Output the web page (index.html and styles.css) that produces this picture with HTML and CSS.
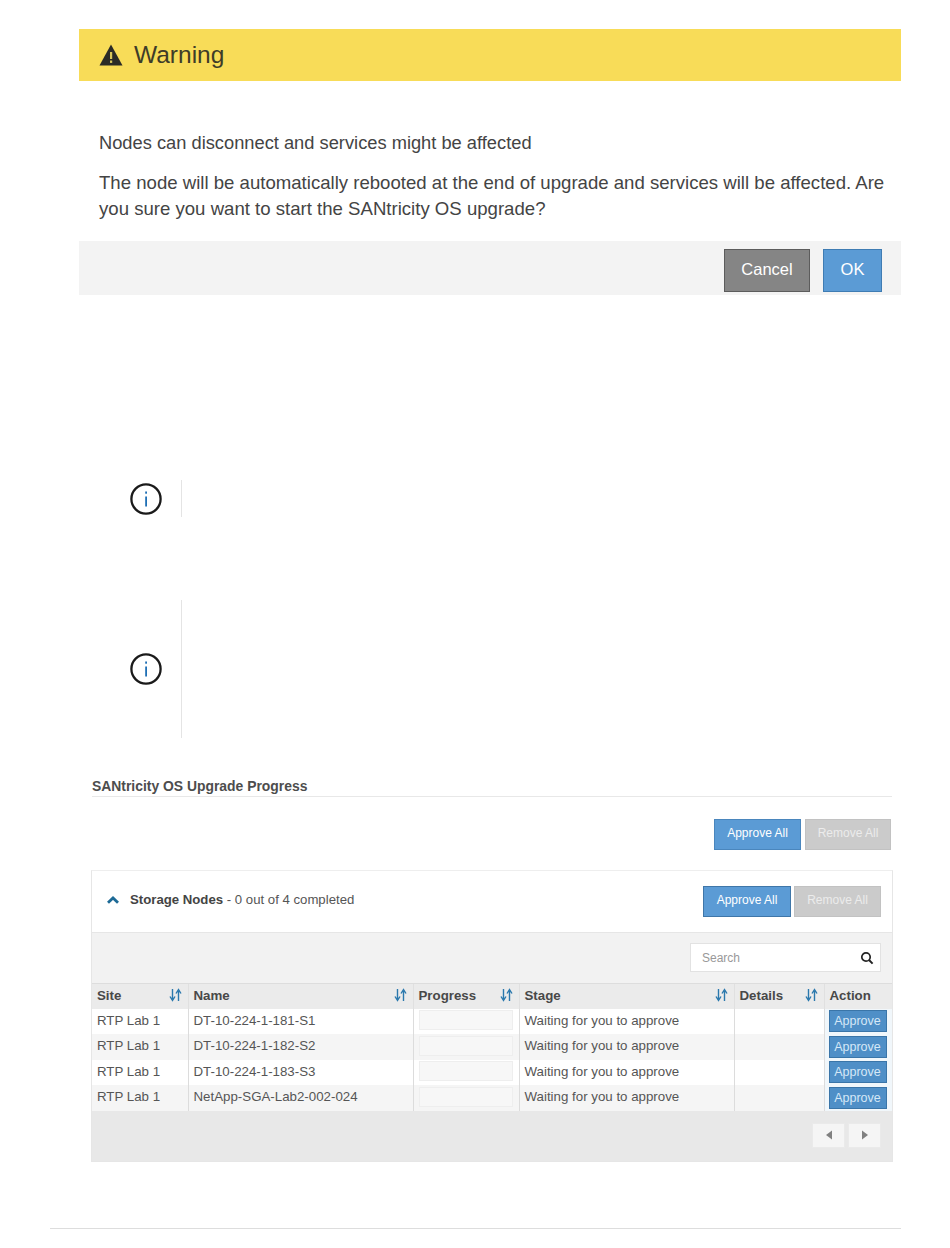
FILE: index.html
```html
<!DOCTYPE html>
<html lang="en">
<head>
    <meta charset="UTF-8">
    <meta name="viewport" content="width=device-width, initial-scale=1.0">
    <title>SANtricity OS Upgrade</title>
    <link rel="stylesheet" href="styles.css">
</head>
<body>
    <div class="dialog">
        <div class="dialog-header">
            <svg class="warn-icon" viewBox="0 0 24 22" width="24" height="22"><path d="M12 0.5 L23.5 21.5 L0.5 21.5 Z" fill="#2b2b26"/><rect x="11" y="8" width="2.2" height="7" fill="#d8c65a"/><rect x="11" y="16.5" width="2.2" height="2.4" fill="#d8c65a"/></svg>
            <span>Warning</span>
        </div>
        <div class="dialog-body">
            <p class="dialog-lead">Nodes can disconnect and services might be affected</p>
            <p class="dialog-text">The node will be automatically rebooted at the end of upgrade and services will be affected. Are you sure you want to start the SANtricity OS upgrade?</p>
        </div>
        <div class="dialog-footer">
            <button class="btn-cancel">Cancel</button>
            <button class="btn-ok">OK</button>
        </div>
    </div>

    <div class="note note-short">
        <div class="note-icon">
            <svg viewBox="0 0 32 32" width="32" height="32"><circle cx="16" cy="16" r="14.6" fill="none" stroke="#1a1a1a" stroke-width="2.3"/><rect x="15.2" y="13.5" width="1.8" height="10" fill="#1f6fb5"/><rect x="15.2" y="8.5" width="1.8" height="2.2" fill="#1f6fb5"/></svg>
        </div>
        <div class="note-body"></div>
    </div>

    <div class="note note-tall">
        <div class="note-icon">
            <svg viewBox="0 0 32 32" width="32" height="32"><circle cx="16" cy="16" r="14.6" fill="none" stroke="#1a1a1a" stroke-width="2.3"/><rect x="15.2" y="13.5" width="1.8" height="10" fill="#1f6fb5"/><rect x="15.2" y="8.5" width="1.8" height="2.2" fill="#1f6fb5"/></svg>
        </div>
        <div class="note-body"></div>
    </div>

    <div class="progress">
        <h2 class="progress-title">SANtricity OS Upgrade Progress</h2>
        <div class="progress-actions">
            <button class="btn-approve-all">Approve All</button>
            <button class="btn-remove-all">Remove All</button>
        </div>

        <div class="panel">
            <div class="panel-header">
                <div class="panel-name">
                    <svg viewBox="0 0 12 8" width="12" height="8"><path d="M1 6.8 L6 2 L11 6.8" fill="none" stroke="#1d6a96" stroke-width="2.8"/></svg>
                    <span><b>Storage Nodes</b> - 0 out of 4 completed</span>
                </div>
                <div class="panel-actions">
                    <button class="btn-approve-all">Approve All</button>
                    <button class="btn-remove-all">Remove All</button>
                </div>
            </div>
            <div class="panel-search">
                <div class="search-box">
                    <span>Search</span>
                    <svg viewBox="0 0 14 14" width="14" height="14"><circle cx="6" cy="6" r="4.2" fill="none" stroke="#222" stroke-width="1.7"/><path d="M9 9 L12.6 12.6" stroke="#222" stroke-width="2"/></svg>
                </div>
            </div>
            <table class="nodes">
                <colgroup>
                    <col class="col-site"><col class="col-name"><col class="col-progress"><col class="col-stage"><col class="col-details"><col class="col-action">
                </colgroup>
                <thead>
                    <tr>
                        <th><div class="th-inner">Site<svg class="sort" viewBox="0 0 13 14" width="13" height="14"><path d="M3.5 1 V11 M1 8.5 L3.5 12.5 L6 8.5 M9.5 13 V3 M7 5.5 L9.5 1.5 L12 5.5" fill="none" stroke="#2a78ad" stroke-width="1.4"/></svg></div></th>
                        <th><div class="th-inner">Name<svg class="sort" viewBox="0 0 13 14" width="13" height="14"><path d="M3.5 1 V11 M1 8.5 L3.5 12.5 L6 8.5 M9.5 13 V3 M7 5.5 L9.5 1.5 L12 5.5" fill="none" stroke="#2a78ad" stroke-width="1.4"/></svg></div></th>
                        <th><div class="th-inner">Progress<svg class="sort" viewBox="0 0 13 14" width="13" height="14"><path d="M3.5 1 V11 M1 8.5 L3.5 12.5 L6 8.5 M9.5 13 V3 M7 5.5 L9.5 1.5 L12 5.5" fill="none" stroke="#2a78ad" stroke-width="1.4"/></svg></div></th>
                        <th><div class="th-inner">Stage<svg class="sort" viewBox="0 0 13 14" width="13" height="14"><path d="M3.5 1 V11 M1 8.5 L3.5 12.5 L6 8.5 M9.5 13 V3 M7 5.5 L9.5 1.5 L12 5.5" fill="none" stroke="#2a78ad" stroke-width="1.4"/></svg></div></th>
                        <th><div class="th-inner">Details<svg class="sort" viewBox="0 0 13 14" width="13" height="14"><path d="M3.5 1 V11 M1 8.5 L3.5 12.5 L6 8.5 M9.5 13 V3 M7 5.5 L9.5 1.5 L12 5.5" fill="none" stroke="#2a78ad" stroke-width="1.4"/></svg></div></th>
                        <th><div class="th-inner">Action</div></th>
                    </tr>
                </thead>
                <tbody>
                    <tr>
                        <td>RTP Lab 1</td><td>DT-10-224-1-181-S1</td><td><div class="bar"></div></td><td>Waiting for you to approve</td><td></td><td><button class="btn-approve">Approve</button></td>
                    </tr>
                    <tr>
                        <td>RTP Lab 1</td><td>DT-10-224-1-182-S2</td><td><div class="bar"></div></td><td>Waiting for you to approve</td><td></td><td><button class="btn-approve">Approve</button></td>
                    </tr>
                    <tr>
                        <td>RTP Lab 1</td><td>DT-10-224-1-183-S3</td><td><div class="bar"></div></td><td>Waiting for you to approve</td><td></td><td><button class="btn-approve">Approve</button></td>
                    </tr>
                    <tr>
                        <td>RTP Lab 1</td><td>NetApp-SGA-Lab2-002-024</td><td><div class="bar"></div></td><td>Waiting for you to approve</td><td></td><td><button class="btn-approve">Approve</button></td>
                    </tr>
                </tbody>
            </table>
            <div class="panel-footer">
                <button class="page-btn"><svg viewBox="0 0 8 10" width="8" height="10"><path d="M7 0.5 L1 5 L7 9.5 Z" fill="#808080"/></svg></button>
                <button class="page-btn"><svg viewBox="0 0 8 10" width="8" height="10"><path d="M1 0.5 L7 5 L1 9.5 Z" fill="#808080"/></svg></button>
            </div>
        </div>
    </div>

    <div class="page-rule"></div>
</body>
</html>
```

FILE: styles.css
```css
* {
    box-sizing: border-box;
}
body {
    margin: 0;
    height: 1248px;
    padding: 29px 49px 0 79px;
    font-family: "Liberation Sans", Arial, sans-serif;
    color: #444;
    background: #fff;
    overflow: hidden;
}
button {
    font-family: inherit;
    cursor: pointer;
}

/* warning dialog */
.dialog-header {
    height: 52px;
    padding-left: 20px;
    display: flex;
    align-items: center;
    gap: 11px;
    background: #f8dc58;
    color: #3f3c28;
    font-size: 24.5px;
}
.dialog-body {
    padding: 49px 8px 0 20px;
    height: 160px;
    line-height: 26px;
    color: #444;
}
.dialog-lead {
    margin: 0 0 14px;
    font-size: 18.3px;
}
.dialog-text {
    margin: 0;
    font-size: 18.6px;
}
.dialog-footer {
    height: 54px;
    padding: 8px 19px 0 0;
    display: flex;
    justify-content: flex-end;
    gap: 13px;
    background: #f3f3f3;
}
.btn-cancel, .btn-ok {
    height: 43px;
    padding: 0 0 2px;
    font-size: 16.5px;
    color: #fff;
}
.btn-cancel {
    width: 86px;
    background: #858585;
    border: 1px solid #5c5c5c;
}
.btn-ok {
    width: 59px;
    background: #5b9bd5;
    border: 1px solid #3f7cb3;
}

/* notes */
.note {
    display: flex;
    align-items: center;
}
.note-icon {
    width: 102px;
    padding-left: 51px;
    display: flex;
}
.note-body {
    height: 100%;
    border-left: 1px solid #e4e4e4;
    flex: 1;
}
.note-short {
    height: 37px;
    margin-top: 185px;
}
.note-tall {
    height: 138px;
    margin-top: 83px;
}

/* upgrade progress */
.progress {
    margin: 40px 9px 0 13px;
}
.progress-title {
    margin: 0;
    height: 19px;
    font-size: 13.9px;
    line-height: 16px;
    font-weight: bold;
    color: #4d4d4d;
    border-bottom: 1px solid #e8e8e8;
}
.progress-actions {
    margin-top: 22px;
    padding-right: 1px;
    display: flex;
    justify-content: flex-end;
    gap: 4px;
}
.btn-approve-all, .btn-remove-all {
    height: 31px;
    width: 87px;
    padding: 0 0 3px;
    font-size: 12px;
    color: #fff;
}
.btn-approve-all {
    background: #5b9bd5;
    border: 1px solid #4a86bd;
}
.btn-remove-all {
    width: 86px;
    background: #cbcbcb;
    border: 1px solid #c2c2c2;
    color: #ececec;
}
.panel {
    margin: 20px -1px 0 -1px;
    border: 1px solid #e6e6e6;
    border-top-color: #eee;
}
.panel-header {
    height: 61px;
    padding: 0 11px 0 15px;
    display: flex;
    align-items: center;
    justify-content: space-between;
    background: #fff;
}
.panel-name {
    padding-bottom: 4px;
    display: flex;
    align-items: center;
    gap: 11px;
    font-size: 13.2px;
    color: #555;
}
.panel-name b {
    font-weight: bold;
    color: #444;
}
.panel-actions {
    display: flex;
    gap: 3px;
}
.panel-actions .btn-approve-all {
    width: 88px;
    border-color: #3f76a8;
}
.panel-actions .btn-remove-all {
    width: 87px;
}
.panel-search {
    height: 51px;
    padding: 10px 11px 0 0;
    display: flex;
    justify-content: flex-end;
    background: #f2f2f2;
    border-top: 1px solid #e6e6e6;
}
.search-box {
    width: 191px;
    height: 29px;
    padding: 0 6px 0 11px;
    display: flex;
    align-items: center;
    justify-content: space-between;
    background: #fff;
    border: 1px solid #e2e2e2;
    font-size: 12px;
    color: #999;
}

/* nodes table */
.nodes {
    width: 100%;
    table-layout: fixed;
    border-collapse: collapse;
    font-size: 13.3px;
}
.col-site { width: 96px; }
.col-name { width: 225px; }
.col-progress { width: 106px; }
.col-stage { width: 215px; }
.col-details { width: 90px; }
.nodes th {
    height: 25px;
    padding: 0 6px 2px 5px;
    text-align: left;
    font-size: 13.3px;
    background: #ebebeb;
    border-top: 1px solid #ddd;
    border-left: 1px solid #e0e0e0;
    color: #484848;
    font-weight: bold;
}
.th-inner {
    display: flex;
    justify-content: space-between;
    align-items: center;
}
.nodes td {
    height: 25.5px;
    padding: 0 6px 2px 5px;
    border-left: 1px solid #dcdcdc;
    color: #555;
    white-space: nowrap;
    background: #fff;
}
.nodes th:first-child, .nodes td:first-child {
    border-left: 0;
}
.nodes tbody tr:nth-child(even) td {
    background: #f5f5f5;
}
.bar {
    height: 20px;
    background: #f7f7f7;
    border: 1px solid #eee;
}
.nodes td:last-child,
.nodes tbody tr:nth-child(even) td:last-child {
    padding: 0 0 0 4px;
    background: #f1f7fb;
}
.btn-approve {
    display: block;
    width: 58px;
    height: 22px;
    padding: 0;
    font-size: 12.5px;
    color: #d5e8f7;
    background: #4f8fc7;
    border: 1px solid #3a75a8;
}
.panel-footer {
    height: 50px;
    padding: 12px 11px 0 0;
    display: flex;
    justify-content: flex-end;
    gap: 3px;
    background: #e8e8e8;
}
.page-btn {
    width: 33px;
    height: 25px;
    padding: 0;
    display: flex;
    align-items: center;
    justify-content: center;
    background: #f5f5f5;
    border: 1px solid #eaeaea;
}
.page-rule {
    margin: 66px 0 0 -29px;
    border-top: 1px solid #ddd;
}
```
